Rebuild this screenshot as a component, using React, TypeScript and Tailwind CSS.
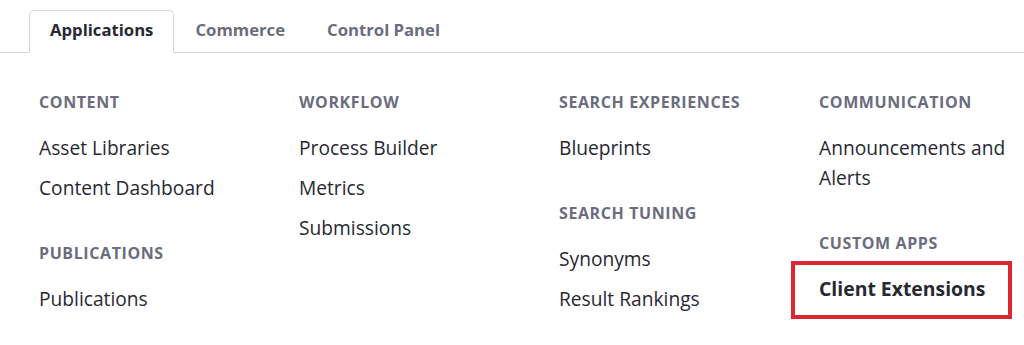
import React from "react";

type Group = { title: string; items: string[]; highlight?: string };

const columns: Group[][] = [
  [
    { title: "CONTENT", items: ["Asset Libraries", "Content Dashboard"] },
    { title: "PUBLICATIONS", items: ["Publications"] },
  ],
  [{ title: "WORKFLOW", items: ["Process Builder", "Metrics", "Submissions"] }],
  [
    { title: "SEARCH EXPERIENCES", items: ["Blueprints"] },
    { title: "SEARCH TUNING", items: ["Synonyms", "Result Rankings"] },
  ],
  [
    { title: "COMMUNICATION", items: ["Announcements and Alerts"] },
    { title: "CUSTOM APPS", items: ["Client Extensions"], highlight: "Client Extensions" },
  ],
];

export default function App() {
  return (
    <div
      className="w-[1024px] h-[345px] bg-white overflow-hidden"
      style={{ fontFamily: '"Open Sans", "Noto Sans", sans-serif' }}
    >
      <div className="flex items-end pl-[29px] pt-[10px] border-b border-[#d6d6d8] h-[53px]">
        <div className="h-[43px] -mb-px px-5 pb-[3px] flex items-center border border-[#d6d6d8] border-b-white rounded-t-[5px] bg-white text-[16.7px] font-bold text-[#272833]">
          Applications
        </div>
        <div className="h-[43px] -mb-px px-5 pb-[3px] flex items-center border border-transparent text-[16.7px] font-bold text-[#6b6c7e]">
          Commerce
        </div>
        <div className="h-[43px] -mb-px px-5 pb-[3px] flex items-center border border-transparent text-[16.7px] font-bold text-[#6b6c7e]">
          Control Panel
        </div>
      </div>
      <div className="grid grid-cols-[260px_260px_260px_200px] pl-[39px] pt-[37px]">
        {columns.map((col, ci) => (
          <div key={ci} className="flex flex-col gap-[33px]">
            {col.map((g) => (
              <div key={g.title} className="flex flex-col">
                <div className="h-6 leading-6 text-[16px] tracking-[0.6px] font-bold text-[#6b6c7e] mb-[14px] whitespace-nowrap">
                  {g.title}
                </div>
                {g.items.map((it) =>
                  it === g.highlight ? (
                    <div key={it} className="relative py-[5px] leading-[30px] text-[19.4px] font-bold text-[#272833] whitespace-nowrap">
                      {it}
                      <div className="absolute left-[-28px] top-[-8px] w-[221px] h-[58px] border-[4px] border-[#dc2832]" />
                    </div>
                  ) : (
                    <div key={it} className="py-[5px] leading-[30px] text-[19.2px] text-[#272833] max-w-[195px]">
                      {it}
                    </div>
                  )
                )}
              </div>
            ))}
          </div>
        ))}
      </div>
    </div>
  );
}
